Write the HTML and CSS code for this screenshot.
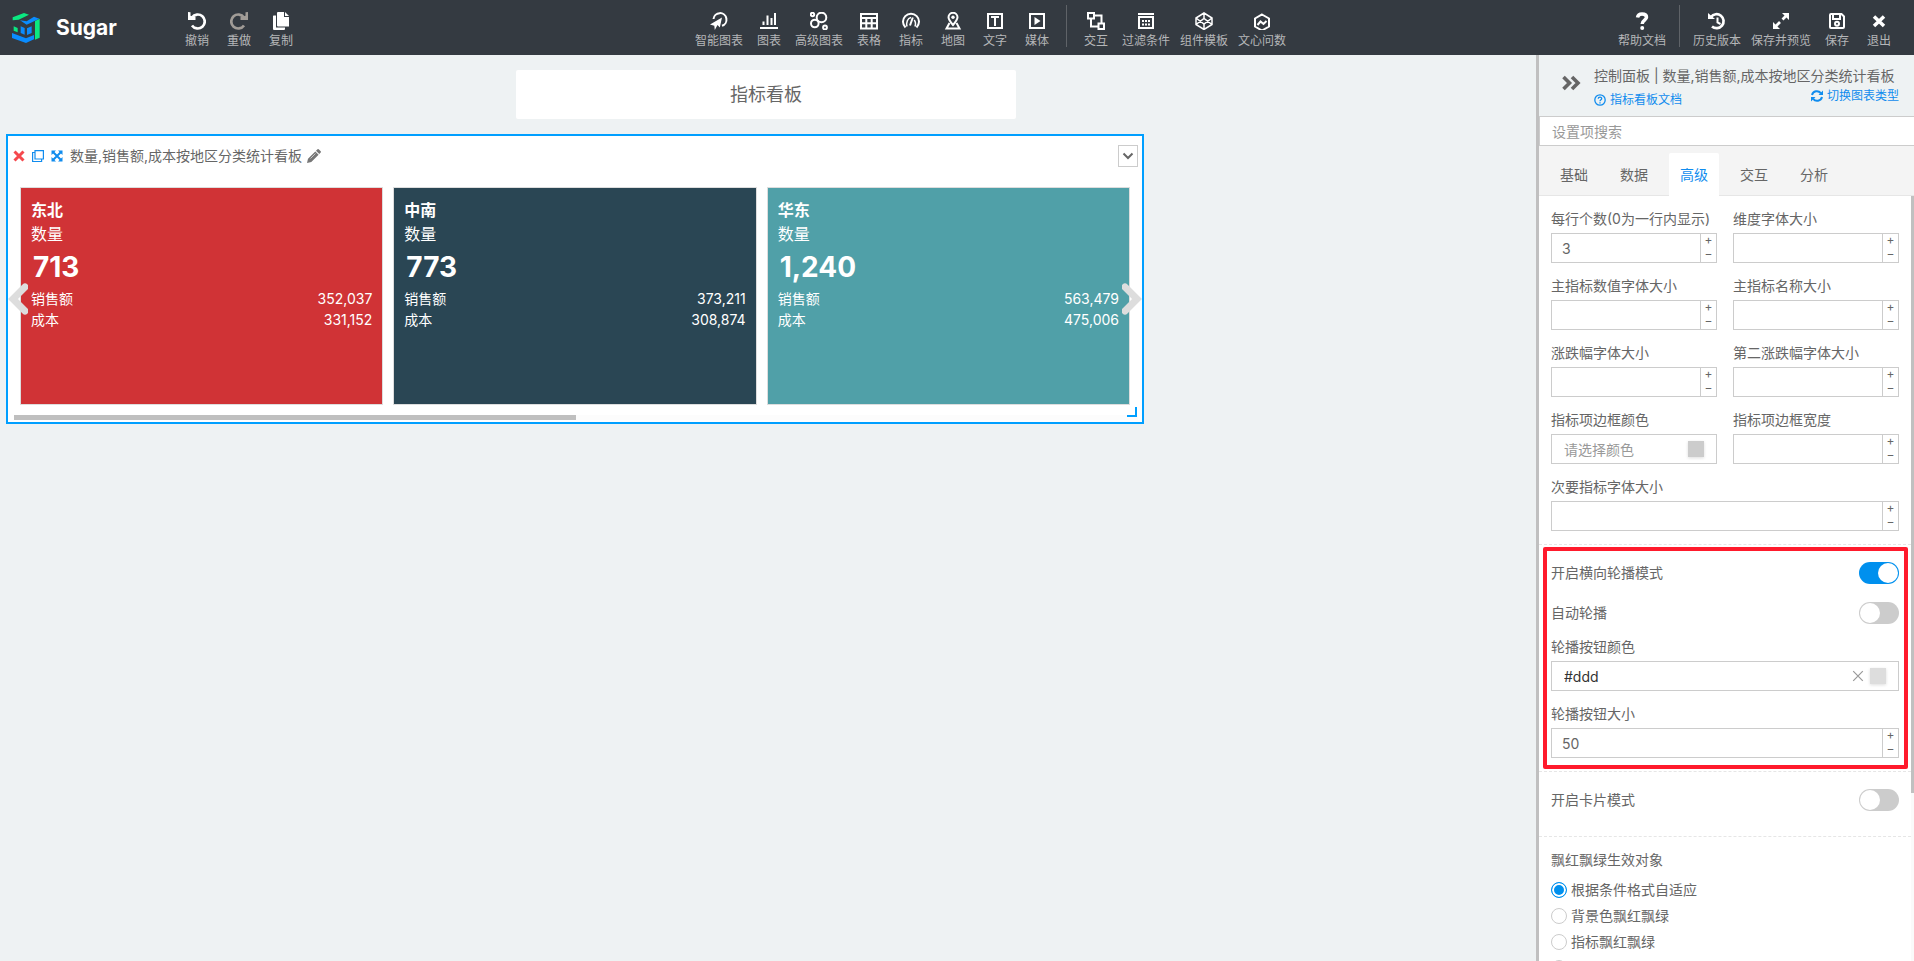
FILE: index.html
```html
<!DOCTYPE html>
<html lang="zh-CN">
<head>
<meta charset="utf-8">
<title>Sugar</title>
<link rel="stylesheet" href="styles.css">
</head>
<body>
<div class="app">
  <header class="toolbar">
    <div class="brand">
      <svg class="brand-logo" viewBox="0 0 84 90" aria-hidden="true">
        <path fill="#0be881" d="M2 13 36 0 51 5 20 20 2 22zM5 40l12 5v13L5 53zM69 24l14-7v57l-14 6z"/>
        <path fill="#0a8cff" d="M24 22l20 3 22-14 16 6L44 35zM26 40l12 5v20l-12-5zM45 46l14-6v20l-14 6zM0 60l42 16 24-10v13L42 90 0 75z"/>
      </svg>
      <span class="brand-name">Sugar</span>
    </div>
    <nav class="tools">
      <button class="tool"><svg viewBox="0 0 18 18"><path class="thick" d="M4 5.5A7 7 0 1 1 4 13.5" /><path class="solid" d="M0 0l2.5.3v3.5L7.5 5v3H0z"/></svg>撤销</button>
      <button class="tool tool-off"><svg viewBox="0 0 18 18"><path class="thick" d="M14 5.500A7 7 0 1 0 14 13.500"/><path class="solid" d="M18 0l-2.500.3v3.500L10.500 5v3H18z"/></svg>重做</button>
      <button class="tool"><svg viewBox="0 0 18 18"><path class="solid" d="M6 0h6v5h5v9.500H6q-1 0-1-1V1q0-1 1-1zM13 0l4 4h-4zM1.500 3.500H4V15.500h9V17q0 1-1 1H2q-1 0-1-1V4z"/></svg>复制</button>
    </nav>
    <span class="spacer spacer-left"></span>
    <nav class="tools">
      <button class="tool"><svg viewBox="0 0 18 18"><path d="M3.500 7A6.500 6.500 0 1 1 12 13.800"/><path class="solid" d="M12 5.500 9.800 15.500 7.500 13 4.800 18 4.300 13.800 0 12.500z"/></svg>智能图表</button>
      <button class="tool"><svg viewBox="0 0 18 18"><path class="solid" d="M0 15h18v2H0zM2.500 9.500h2V13h-2zM6.500 3.500h2V13h-2zM10.500 6h2v7h-2zM14 1h2v12h-2z"/></svg>图表</button>
      <button class="tool"><svg viewBox="0 0 18 18"><circle cx="2.500" cy="2.500" r="1.700"/><circle cx="11.500" cy="5.500" r="4.800"/><circle cx="4.800" cy="11.500" r="3.800"/><circle cx="15" cy="15.500" r="1.900"/></svg>高级图表</button>
      <button class="tool"><svg viewBox="0 0 18 18"><path d="M1 2h16v14.500H1zM1 6h16M1 11.300h16M6.300 6v10.500M11.700 6v10.500"/></svg>表格</button>
      <button class="tool"><svg viewBox="0 0 18 18"><path d="M3.500 15.500a8 8 0 1 1 11 0"/><path class="thin" d="M5 14.500c-1-4 .5-8.500 4-9M13 14.500c1-3 .5-5-.8-6.500"/><path d="M8 13.500 10.800 5.500"/></svg>指标</button>
      <button class="tool"><svg viewBox="0 0 18 18"><path d="M9 13C5.500 9 4.500 7.500 4.500 5.300a4.500 4.500 0 0 1 9 0C13.500 7.500 12.500 9 9 13zM5.500 11 2.500 16.500h13L12.500 11"/><circle class="solid" cx="9" cy="5.300" r="1.700"/></svg>地图</button>
      <button class="tool"><svg viewBox="0 0 18 18"><path d="M2 2h14v14H2zM5 5h8M9 5v9"/></svg>文字</button>
      <button class="tool"><svg viewBox="0 0 18 18"><path d="M2 2h14v14H2z"/><path class="solid" d="M6.500 5l6 4-6 4z"/></svg>媒体</button>
      <span class="divider"></span>
      <button class="tool"><svg viewBox="0 0 18 18"><path d="M1 1h6v5.500H1zM11.500 11.500H17V17h-5.500zM7 3.500h7.500v8M4 6.500V14.500h7.500"/></svg>交互</button>
      <button class="tool"><svg viewBox="0 0 18 18"><path d="M1 2h16M2 5h14v11H2z"/><path class="dots" d="M5 9h8M5 12.500h8"/></svg>过滤条件</button>
      <button class="tool"><svg viewBox="0 0 18 18"><path class="thin" d="M9 1l8 5v6.500l-8 5-8-5V6zM1 6l8 6 8-6M1 12.500l8-6 8 6M9 1v5.500M9 12v5.500"/></svg>组件模板</button>
      <button class="tool"><svg viewBox="0 0 18 18"><path d="M9 2.500l7 4v8l-7 4-7-4v-8zM4.500 13 7.500 9.500l3 2.500 3-3"/></svg>文心问数</button>
    </nav>
    <span class="spacer spacer-right"></span>
    <nav class="tools">
      <button class="tool"><svg viewBox="0 0 18 18"><path class="heavy" d="M4.500 5.500C5 2.800 6.800 2 9 2c3 0 4.500 1.500 4.500 3.300C13.500 8.300 9.200 8 9.200 12"/><circle class="solid" cx="9.200" cy="16" r="2"/></svg>帮助文档</button>
      <span class="divider"></span>
      <button class="tool"><svg viewBox="0 0 18 18"><path class="thick" d="M3 5a7 7 0 1 1 1 9.500"/><path d="M9.500 5.500v5l3 1.500"/><path class="solid" d="M0 1l7 6H0z"/></svg>历史版本</button>
      <button class="tool"><svg viewBox="0 0 18 18"><path class="thick" d="M4 14l4-4M10.500 7.500 14.500 3.500"/><path class="solid" d="M10 1h7v7zM1 10v7h7z"/></svg>保存并预览</button>
      <button class="tool"><svg viewBox="0 0 18 18"><path d="M3 2h10.500L16 4.500V15q0 1-1 1H3q-1 0-1-1V3q0-1 1-1zM5 2.500V7h7V2.500"/><circle cx="9" cy="11.700" r="2"/></svg>保存</button>
      <button class="tool"><svg viewBox="0 0 18 18"><path class="heavy" d="M4 4.500l10 9.500M14 4.500 4 14"/></svg>退出</button>
    </nav>
  </header>

  <main class="canvas">
    <h1 class="page-title">指标看板</h1>
    <section class="widget">
      <div class="widget-head">
        <button class="mini" aria-label="删除"><svg viewBox="0 0 12 12"><path stroke="#f5484d" stroke-width="3" d="M1.500 1.500l9 9M10.500 1.500l-9 9"/></svg></button>
        <button class="mini" aria-label="复制组件"><svg viewBox="0 0 12 12"><path stroke="#108cee" stroke-width="1.200" d="M3 .6h8.400v8.400H3zM3 2.500H.6v9h9V9"/></svg></button>
        <button class="mini" aria-label="放大"><svg viewBox="0 0 12 12"><path stroke="#108cee" stroke-width="2" d="M2 2l8 8M10 2l-8 8"/><path fill="#108cee" d="M.5.5H5L.5 5zM11.500.5V5L7 .5zM.5 11.500V7L5 11.500zM11.500 11.500H7L11.500 7z"/></svg></button>
        <h2 class="widget-title">数量,销售额,成本按地区分类统计看板</h2>
        <button class="mini mini-edit" aria-label="编辑标题"><svg viewBox="0 0 14 14"><path fill="#777" d="M10.500.3q.6-.5 1.200 0l2 2q.5.600 0 1.200L12.300 5 9 1.700zM8.300 2.400l3.300 3.300-7.300 7.300L0 14l1-4.300z"/><path stroke="#fff" stroke-width=".6" d="M3.500 9.500l5-5"/></svg></button>
        <button class="fold" aria-label="更多"><svg viewBox="0 0 12 12"><path stroke="#666" stroke-width="2" d="M1.500 3.500 6 8l4.500-4.500"/></svg></button>
      </div>
      <div class="cards">
        <article class="card card-red">
          <h3>东北</h3><p class="metric">数量</p><p class="value">713</p>
          <dl><dt>销售额</dt><dd>352,037</dd><dt>成本</dt><dd>331,152</dd></dl>
        </article>
        <article class="card card-navy">
          <h3>中南</h3><p class="metric">数量</p><p class="value">773</p>
          <dl><dt>销售额</dt><dd>373,211</dd><dt>成本</dt><dd>308,874</dd></dl>
        </article>
        <article class="card card-teal">
          <h3>华东</h3><p class="metric">数量</p><p class="value">1,240</p>
          <dl><dt>销售额</dt><dd>563,479</dd><dt>成本</dt><dd>475,006</dd></dl>
        </article>
      </div>
      <div class="track"><div class="track-thumb"></div></div>
      <button class="arrow arrow-prev" aria-label="上一页"><svg viewBox="0 0 20 32"><path d="M17 4 5 16l12 12"/></svg></button>
      <button class="arrow arrow-next" aria-label="下一页"><svg viewBox="0 0 20 32"><path d="M3 4l12 12L3 28"/></svg></button>
      <span class="resize"></span>
    </section>
  </main>

  <aside class="panel">
    <div class="panel-head">
      <button class="collapse" aria-label="收起"><svg viewBox="0 0 20 16"><path d="M2.500 2l6 6-6 6M11 2l6 6-6 6"/></svg></button>
      <div class="panel-info">
        <h2>控制面板 | 数量,销售额,成本按地区分类统计看板</h2>
        <div class="panel-links">
          <a class="doc-link" href="#"><svg viewBox="0 0 12 12"><circle cx="6" cy="6" r="5.200"/><path d="M4.200 4.800C4.300 2.600 7.800 2.700 7.700 4.700 7.700 5.800 6 5.800 6 7.200M6 8.200v1.300"/></svg>指标看板文档</a>
          <a href="#"><svg viewBox="0 0 12 12"><path stroke-width="2" d="M1 5a5 5 0 0 1 8.800-1.800M11 7A5 5 0 0 1 2.200 8.800"/><path class="link-solid" d="M12 .5V5H7.500zM0 11.500V7h4.500z"/></svg>切换图表类型</a>
        </div>
      </div>
    </div>
    <input class="search" type="text" placeholder="设置项搜索" aria-label="设置项搜索">
    <div class="tabs" role="tablist">
      <button class="tab" role="tab">基础</button>
      <button class="tab" role="tab">数据</button>
      <button class="tab tab-on" role="tab" aria-selected="true">高级</button>
      <button class="tab" role="tab">交互</button>
      <button class="tab" role="tab">分析</button>
    </div>
    <div class="panel-body">
      <form class="settings">
        <div class="group fields">
          <div class="field"><label for="f1">每行个数(0为一行内显示)</label><div class="box"><input id="f1" type="number" value="3"><span class="steps"><button type="button">+</button><button type="button">−</button></span></div></div>
          <div class="field"><label for="f2">维度字体大小</label><div class="box"><input id="f2" type="number"><span class="steps"><button type="button">+</button><button type="button">−</button></span></div></div>
          <div class="field"><label for="f3">主指标数值字体大小</label><div class="box"><input id="f3" type="number"><span class="steps"><button type="button">+</button><button type="button">−</button></span></div></div>
          <div class="field"><label for="f4">主指标名称大小</label><div class="box"><input id="f4" type="number"><span class="steps"><button type="button">+</button><button type="button">−</button></span></div></div>
          <div class="field"><label for="f5">涨跌幅字体大小</label><div class="box"><input id="f5" type="number"><span class="steps"><button type="button">+</button><button type="button">−</button></span></div></div>
          <div class="field"><label for="f6">第二涨跌幅字体大小</label><div class="box"><input id="f6" type="number"><span class="steps"><button type="button">+</button><button type="button">−</button></span></div></div>
          <div class="field"><label for="f7">指标项边框颜色</label><div class="box box-color"><input id="f7" type="text" placeholder="请选择颜色"><span class="swatch"></span></div></div>
          <div class="field"><label for="f8">指标项边框宽度</label><div class="box"><input id="f8" type="number"><span class="steps"><button type="button">+</button><button type="button">−</button></span></div></div>
          <div class="field field-wide"><label for="f9">次要指标字体大小</label><div class="box"><input id="f9" type="number"><span class="steps"><button type="button">+</button><button type="button">−</button></span></div></div>
        </div>
        <div class="group carousel">
          <div class="switch-row"><label for="s1">开启横向轮播模式</label><input class="switch" id="s1" type="checkbox" checked></div>
          <div class="switch-row"><label for="s2">自动轮播</label><input class="switch" id="s2" type="checkbox"></div>
          <div class="field"><label for="f10">轮播按钮颜色</label><div class="box box-color"><input id="f10" type="text" value="#ddd"><button class="clear" type="button" aria-label="清除"><svg viewBox="0 0 10 10"><path d="M1 1l8 8M9 1 1 9"/></svg></button><span class="swatch swatch-light"></span></div></div>
          <div class="field"><label for="f11">轮播按钮大小</label><div class="box"><input id="f11" type="number" value="50"><span class="steps"><button type="button">+</button><button type="button">−</button></span></div></div>
          <span class="highlight"></span>
        </div>
        <div class="group card-mode">
          <div class="switch-row"><label for="s3">开启卡片模式</label><input class="switch" id="s3" type="checkbox"></div>
        </div>
        <fieldset class="group radios">
          <legend>飘红飘绿生效对象</legend>
          <label><input type="radio" name="scope" checked>根据条件格式自适应</label>
          <label><input type="radio" name="scope">背景色飘红飘绿</label>
          <label><input type="radio" name="scope">指标飘红飘绿</label>
          <label><input type="radio" name="scope"></label>
        </fieldset>
      </form>
      <div class="rail"><div class="rail-thumb"></div></div>
    </div>
  </aside>
</div>
</body>
</html>
```
FILE: styles.css
```css
* { box-sizing: border-box; }
body, h1, h2, h3, p, dl, dd, fieldset, legend { margin: 0; padding: 0; }
body {
  font: 14px/20px Inter, "Noto Sans CJK SC", sans-serif;
  color: #666;
  background: #eef2f3;
}
button, input { font: inherit; color: inherit; margin: 0; }
button { padding: 0; border: 0; background: none; cursor: pointer; }
svg { display: block; fill: none; stroke: none; }
a { color: #108cee; text-decoration: none; }

.app {
  display: grid;
  grid-template: 55px minmax(0, 1fr) / minmax(0, 1fr) 378px;
  height: 100vh;
  overflow: hidden;
}

/* toolbar */
.toolbar {
  grid-column: 1 / -1;
  display: flex;
  align-items: stretch;
  padding-right: 14px;
  background: #343a41;
}
.brand {
  display: flex;
  align-items: center;
  flex: 0 0 176px;
  gap: 16px;
  padding-left: 12px;
}
.brand-logo { width: 28px; height: 30px; }
.brand-name { font-size: 21px; font-weight: 700; color: #fff; }
.tools { display: flex; flex: none; }
.tool {
  display: flex;
  flex-direction: column;
  align-items: center;
  gap: 2px;
  min-width: 42px;
  padding: 12px 5px 0;
  font-size: 12px;
  line-height: 18px;
  color: #b4b6b8;
  white-space: nowrap;
}
.tool svg { width: 18px; height: 18px; stroke: #fff; stroke-width: 2; }
.tool-off svg { stroke: #a19c97; }
.tool .thick { stroke-width: 2.7; }
.tool .thin { stroke-width: 1.5; }
.tool .heavy { stroke-width: 3.5; }
.tool .dots { stroke-dasharray: 2 1; }
.tool .solid { fill: #fff; stroke: none; }
.tool-off .solid { fill: #a19c97; }
.divider { width: 1px; margin: 5px 8px 8px; background: #5f6368; }
.spacer-left { flex: 388 1 0; }
.spacer-right { flex: 322 1 0; }

/* canvas */
.canvas {
  display: flex;
  flex-direction: column;
  gap: 15px;
  padding: 15px 10px 15px 6px;
}
.page-title {
  align-self: center;
  width: 100%;
  max-width: 500px;
  padding: 12px;
  border-radius: 2px;
  background: #fff;
  font-size: 18px;
  line-height: 25px;
  font-weight: 400;
  text-align: center;
}
.widget {
  position: relative;
  width: 75%;
  max-width: 1138px;
  padding: 9px 4px 2px 6px;
  border: 2px solid #009fff;
  background: #fff;
}
.widget-head { display: flex; align-items: center; height: 22px; }
.mini { flex: none; margin-right: 7px; }
.mini:first-child { margin-left: -1px; }
.mini svg { width: 12px; height: 12px; }
.widget-title { font-size: 14px; font-weight: 400; }
.mini-edit { margin-left: 5px; }
.mini-edit svg { width: 14px; height: 14px; }
.fold {
  display: grid;
  place-items: center;
  width: 20px;
  height: 22px;
  margin-left: auto;
  border: 1px solid #ccc;
}
.fold svg { width: 12px; height: 12px; }
.cards {
  display: grid;
  grid-template-columns: repeat(3, minmax(0, 1fr));
  gap: 10px;
  padding: 20px 8px 10px 6px;
}
.card {
  min-height: 218px;
  padding: 10px;
  border: 1px solid #ddd;
  color: #fff;
}
.card-red { background: #d03336; }
.card-navy { background: #2a4654; }
.card-teal { background: #50a0a8; }
.card h3 { font-size: 16px; line-height: 24px; font-weight: 600; }
.metric { font-size: 16px; line-height: 24px; }
.value { padding: 0 2px; font-size: 28px; line-height: 42px; font-weight: 700; }
.card dl { display: grid; grid-template-columns: auto auto; line-height: 21px; }
.card dd { text-align: right; }
.track { height: 5px; background: #fcfcfc; }
.track-thumb { width: 50%; height: 5px; background: #bfbfbf; }
.arrow { position: absolute; top: 147px; }
.arrow svg { width: 20px; height: 32px; stroke: #ddd; stroke-width: 7; stroke-linecap: round; stroke-linejoin: miter; }
.arrow-prev { left: 0; }
.arrow-next { right: 0; }
.resize {
  position: absolute;
  right: 5px;
  bottom: 5px;
  width: 10px;
  height: 10px;
  border: solid #009fff;
  border-width: 0 2px 2px 0;
}

/* settings panel */
.panel {
  display: flex;
  flex-direction: column;
  min-height: 0;
  border-left: 3px solid #c0c0c0;
  background: #fff;
}
.panel-head {
  display: flex;
  align-items: flex-start;
  padding: 11px 15px 8px 22px;
  background: #eef2f3;
}
.collapse { flex: 0 0 33px; padding-top: 9px; }
.collapse svg { width: 20px; height: 16px; stroke: #666; stroke-width: 3.6; }
.panel-info { flex: 1; min-width: 0; }
.panel-info h2 { font-size: 14px; font-weight: 400; white-space: nowrap; }
.panel-links { display: flex; justify-content: space-between; font-size: 12px; line-height: 16px; }
.panel-links a { display: flex; align-items: center; gap: 4px; }
.panel-links .doc-link { padding-top: 6px; }
.panel-links a:not(.doc-link) { padding-bottom: 2px; }
.panel-links svg { width: 12px; height: 12px; stroke: #108cee; stroke-width: 1.3; }
.panel-links .link-solid { fill: #108cee; stroke: none; }
.search {
  width: 100%;
  height: 30px;
  padding: 0 12px;
  border: 1px solid #ccc;
  border-right: 0;
  outline: 0;
  background: #fff;
}
::placeholder { color: #999; opacity: 1; }
.tabs {
  display: flex;
  gap: 10px;
  padding: 7px 10px 0;
  background: #f4f4f4;
  box-shadow: inset 0 -1px #e6e6e6;
}
.tab { padding: 11px; height: 43px; line-height: 21px; border-radius: 2px 2px 0 0; }
.tab-on { background: #fff; color: #108cee; }
.panel-body { flex: 1; display: flex; min-height: 0; overflow: hidden; }
.settings { flex: 1; min-width: 0; }
.rail { flex: 0 0 3px; background: #fafafa; }
.rail-thumb { height: 78%; background: #c0c0c0; }
.group { position: relative; padding: 0 12px; border: 0; border-bottom: 1px dashed #e6e6e6; }
.fields {
  display: grid;
  grid-template-columns: repeat(2, minmax(0, 1fr));
  column-gap: 16px;
  padding-top: 13px;
}
.field { display: flex; flex-direction: column; gap: 4px; padding-bottom: 13px; }
.field-wide { grid-column: 1 / -1; }
.box { display: flex; align-items: center; height: 30px; border: 1px solid #ccc; }
.box input {
  flex: 1;
  min-width: 0;
  height: 28px;
  padding: 0 10px;
  border: 0;
  outline: 0;
  background: none;
  appearance: textfield;
}
.box input::-webkit-inner-spin-button { display: none; }
.box-color { padding-right: 12px; }
.box-color input { padding: 0 12px; color: #333; }
.steps { display: grid; width: 16px; height: 28px; border-left: 1px solid #ccc; }
.steps button { height: 14px; padding-bottom: 2px; font-size: 12px; line-height: 12px; }
.swatch { width: 16px; height: 16px; background: #ccc; box-shadow: 0 1px 3px #ddd; }
.swatch-light { background: #ddd; }
.clear { margin-right: 6px; }
.clear svg { width: 12px; height: 12px; stroke: #999; }
.carousel { padding-top: 17px; }
.switch-row { display: flex; justify-content: space-between; align-items: center; height: 22px; }
.carousel .switch-row { margin-bottom: 18px; }
.carousel .switch-row + .field { margin-top: -5px; }
.switch {
  appearance: none;
  width: 40px;
  height: 22px;
  padding: 1px;
  border-radius: 11px;
  background: #ccc;
}
.switch::before {
  content: "";
  display: block;
  width: 20px;
  height: 20px;
  border-radius: 50%;
  background: #fff;
}
.switch:checked { background: #0090ee; }
.switch:checked::before { margin-left: auto; }
.highlight {
  position: absolute;
  inset: 2px 3px 2px 4px;
  border: 4px solid #ff1a2c;
  border-radius: 2px;
  pointer-events: none;
}
.card-mode { padding-top: 17px; padding-bottom: 25px; }
.radios { padding-top: 13px; border-bottom: 0; }
.radios legend { float: left; width: 100%; margin-bottom: 7px; }
.radios label { clear: both; display: flex; align-items: center; gap: 4px; height: 26px; }
.radios input {
  appearance: none;
  width: 16px;
  height: 16px;
  border: 1px solid #ccc;
  border-radius: 50%;
  background: #fff;
}
.radios input:checked { border-color: #0090ee; background: #0090ee; box-shadow: inset 0 0 0 2px #fff; }
```
